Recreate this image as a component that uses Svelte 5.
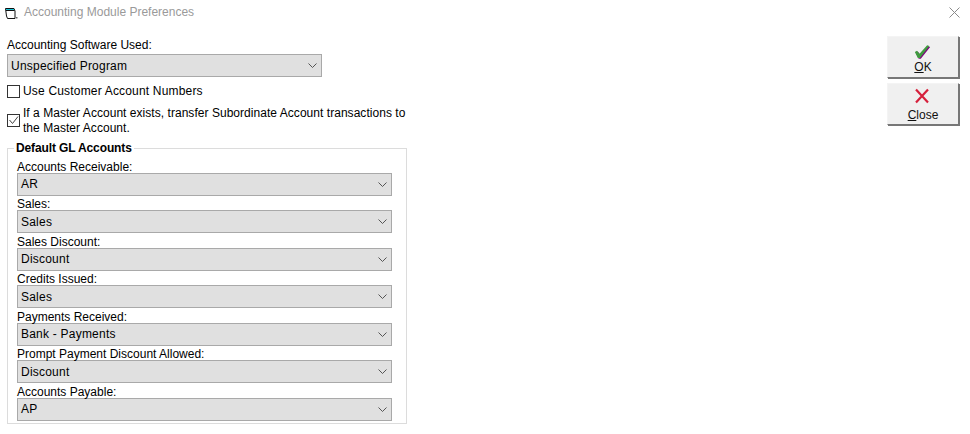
<script>
  const accounts = [
    { label: 'Accounts Receivable:', value: 'AR' },
    { label: 'Sales:', value: 'Sales' },
    { label: 'Sales Discount:', value: 'Discount' },
    { label: 'Credits Issued:', value: 'Sales' },
    { label: 'Payments Received:', value: 'Bank - Payments' },
    { label: 'Prompt Payment Discount Allowed:', value: 'Discount' },
    { label: 'Accounts Payable:', value: 'AP' }
  ];
</script>

{#snippet combo(value)}
  <div class="combo">
    <span>{value}</span>
    <svg class="chevron" width="9" height="5" viewBox="0 0 9 5"><path d="M0.5 0.5 L4.5 4.5 L8.5 0.5" fill="none" stroke="#555" /></svg>
  </div>
{/snippet}

<div class="window">
  <header class="titlebar">
    <svg class="app-icon" width="14" height="13" viewBox="0 0 14 13">
      <path d="M1.5 1.5 H10 L11 4 V11.5 H3.5 L2.5 9 Z" fill="#fff" stroke="#111" />
      <path d="M2 2.5 H10" stroke="#19c4d8" />
      <path d="M2 3.5 H10.5" stroke="#111" />
      <rect x="12" y="10" width="1.5" height="1.5" fill="#666" />
    </svg>
    <span class="title">Accounting Module Preferences</span>
    <svg class="close-x" width="11" height="11" viewBox="0 0 11 11"><path d="M0.5 0.5 L10.5 10.5 M10.5 0.5 L0.5 10.5" stroke="#8a8a8a" fill="none" /></svg>
  </header>

  <div class="body">
    <main class="form">
      <div class="label">Accounting Software Used:</div>
      <div class="software">{@render combo('Unspecified Program')}</div>

      <div class="check one">
        <span class="box"></span>
        <span class="wide">Use Customer Account Numbers</span>
      </div>
      <div class="check two">
        <span class="box">
          <svg width="11" height="11" viewBox="0 0 11 11"><path d="M1.5 5 L4.5 8.5 L10 1.5" fill="none" stroke="#444" /></svg>
        </span>
        <span class="wrap">If a Master Account exists, transfer Subordinate Account transactions to the Master Account.</span>
      </div>

      <fieldset class="group">
        <legend>Default GL Accounts</legend>
        {#each accounts as a}
          <div class="label row">{a.label}</div>
          {@render combo(a.value)}
        {/each}
      </fieldset>
    </main>

    <aside class="buttons">
      <button class="btn ok">
        <svg width="17" height="16" viewBox="0 0 20 18">
          <path d="M2 10 L4.5 8.5 L7 12 L16 2 L19 3 L8 17 L5.5 17 Z" fill="#800080" />
          <path d="M1 9 L3.5 7.5 L6.5 11 L15.5 1 L18 2 L7 16 L4.5 16 Z" fill="#3f9a3f" />
        </svg>
        <span><u>O</u>K</span>
      </button>
      <button class="btn close">
        <svg width="16" height="16" viewBox="0 0 16 16">
          <path d="M2 1.5 L14 14.5 M14 1.5 L2 14.5" stroke="#d6203c" stroke-width="2.2" fill="none" />
        </svg>
        <span><u>C</u>lose</span>
      </button>
    </aside>
  </div>
</div>

<style>
  :global(body) {
    background: #fff;
  }

  .window {
    width: 970px;
    height: 434px;
    overflow: hidden;
    background: #fff;
    color: #000;
    font-family: "Liberation Sans", Arial, sans-serif;
    font-size: 12px;
    line-height: 14px;
  }

  .titlebar {
    display: flex;
    align-items: center;
    height: 24px;
    padding: 0 10px 0 4px;
  }

  .app-icon {
    margin: 3px 6px 0 0;
  }

  .title {
    flex: 1;
    color: #9a9a9a;
  }

  .body {
    display: flex;
    justify-content: space-between;
    padding: 14px 11px 0 7px;
  }

  .form { width: 401px; }

  .label { height: 14px; }
  .label.row { height: 13px; }

  .software { width: 315px; margin-top: 2px; }

  .combo {
    display: flex;
    align-items: center;
    justify-content: space-between;
    box-sizing: border-box;
    height: 23px;
    margin-bottom: 1.5px;
    padding: 0 4px 0 3px;
    background: #e0e0e0;
    border: 1px solid #a9a9a9;
    letter-spacing: 0.22px;
  }

  .check {
    display: flex;
    align-items: center;
    gap: 3px;
  }

  .check.one { margin-top: 7px; }
  .check.two { margin-top: 8px; }

  .box {
    display: flex;
    align-items: center;
    justify-content: center;
    flex: none;
    box-sizing: border-box;
    width: 13px;
    height: 13px;
    border: 1px solid #333;
  }

  .check.two .box { margin-top: -1px; }

  .wide { letter-spacing: 0.18px; }

  .wrap {
    width: 385px;
    line-height: 15px;
    letter-spacing: 0.04px;
  }

  .group {
    box-sizing: border-box;
    width: 400px;
    height: 283px;
    margin: 5px 0 0;
    padding: 4.5px 14px 0 9px;
    border: 1px solid #dcdcdc;
    min-width: 0;
  }

  legend {
    padding: 0 2px;
    margin-left: -3px;
    font-weight: bold;
    letter-spacing: -0.12px;
  }

  .buttons {
    display: flex;
    flex-direction: column;
    gap: 5px;
    margin-top: -2px;
  }

  .btn {
    display: flex;
    flex-direction: column;
    align-items: center;
    justify-content: flex-end;
    box-sizing: border-box;
    width: 72px;
    height: 42px;
    padding: 0 0 3px;
    background: #f0f0f0;
    border: 1px solid;
    border-color: #f4f4f4 #777 #777 #f4f4f4;
    box-shadow: 1px 1px 0 #777;
    color: #111;
    font: inherit;
  }

  .btn.ok svg { margin-right: 1px; }

  .btn.close { padding-bottom: 2px; }
  .btn.close svg { margin: 0 3px 4px 0; }
</style>
